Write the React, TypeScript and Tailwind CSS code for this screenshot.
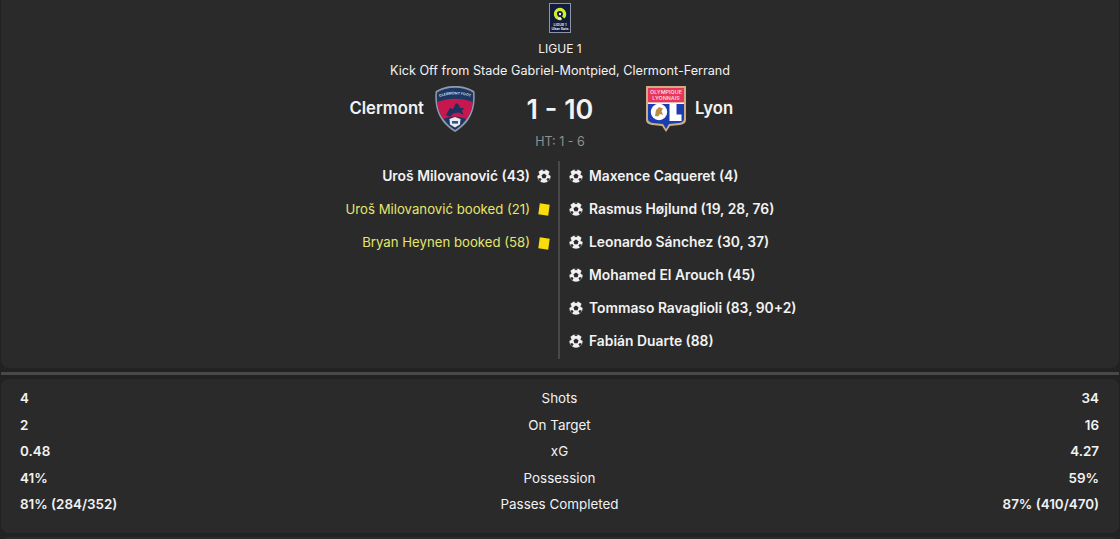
import React from 'react';

const HOME_EVENTS = [
  { label: 'Uroš Milovanović (43)', type: 'goal' },
  { label: 'Uroš Milovanović booked (21)', type: 'card' },
  { label: 'Bryan Heynen booked (58)', type: 'card' },
];

const AWAY_GOALS = [
  'Maxence Caqueret (4)',
  'Rasmus Højlund (19, 28, 76)',
  'Leonardo Sánchez (30, 37)',
  'Mohamed El Arouch (45)',
  'Tommaso Ravaglioli (83, 90+2)',
  'Fabián Duarte (88)',
];

const STATS = [
  ['4', 'Shots', '34'],
  ['2', 'On Target', '16'],
  ['0.48', 'xG', '4.27'],
  ['41%', 'Possession', '59%'],
  ['81% (284/352)', 'Passes Completed', '87% (410/470)'],
];

const Ball = () => (
  <svg width="14" height="14" viewBox="0 0 14 14" className="shrink-0">
    <circle cx="7" cy="7" r="6.7" fill="#f0f0f0" />
    <path d="M7 4.4 9.5 6.2 8.6 9.2H5.4L4.5 6.2Z" fill="#2a2a2a" />
    <path d="M4.6 .8 7 2.2 9.4 .8 7 0Z M12.4 3 11.4 5.6 13.8 7.2 13.8 5Z M1.6 3 2.6 5.6.2 7.2.2 5Z M3 12.6 4.6 10.6 3.2 9 1 9.8Z M11 12.6 9.4 10.6 10.8 9 13 9.8Z" fill="#2a2a2a" />
  </svg>
);

const YellowCard = () => (
  <span className="block w-[10px] h-[11px] mr-[2px] bg-[#f8dc0c] rotate-[8deg] shrink-0" />
);

const LigueLogo = () => (
  <svg width="22" height="30" viewBox="0 0 22 30">
    <rect x="0.5" y="0.5" width="21" height="29" fill="#101d3d" stroke="#8d96a6" />
    <circle cx="11" cy="11" r="4.6" fill="none" stroke="#d4ec2a" strokeWidth="3.2" strokeDasharray="26 3" transform="rotate(75 11 11)" />
    <path d="M9 15.6 12.5 15.8" stroke="#f3f6c0" strokeWidth="1.4" />
    <circle cx="11" cy="11" r="1.2" fill="#dfe6f0" />
    <text x="11" y="22.5" textAnchor="middle" fontSize="3.6" fill="#dfe2e8" fontFamily="Inter, sans-serif" fontWeight="700">LIGUE 1</text>
    <text x="11" y="27" textAnchor="middle" fontSize="3.6" fill="#dfe2e8" fontFamily="Inter, sans-serif" fontWeight="700">Uber Eats</text>
  </svg>
);

const ClermontBadge = () => (
  <svg width="40" height="46" viewBox="0 0 40 46">
    <path d="M20 0C28 0 35 2 39.5 5.5 40.5 20 38 35 20 46 2 35-.5 20 .5 5.5 5 2 12 0 20 0Z" fill="#8f99ab" />
    <path d="M20 1.8C27 1.8 33.5 3.5 38 6.5 38.8 20 36 33.5 20 44 4 33.5 1.2 20 2 6.5 6.5 3.5 13 1.8 20 1.8Z" fill="#1d3763" />
    <path d="M2.4 16C13 11.5 27 11.5 37.6 16 37.4 22 35.5 28 31.5 33 24 29.5 16 29.5 8.5 33 4.5 28 2.6 22 2.4 16Z" fill="#c8174f" />
    <path d="M11 29 15 22 18 23 21 17 24 19 25 22 29 22 27 25 28.5 29 24 26.5 18 27.5 15 31Z" fill="#1b3260" />
    <path d="M20 31 25.5 33 25 38.5 20 41.5 15 38.5 14.5 33Z" fill="#e8ebf0" />
    <rect x="17" y="35" width="6" height="2.6" fill="#37527f" />
    <path id="clermont-arc" d="M3 11.5C13 7.5 27 7.5 37 11.5" fill="none" />
    <text fontSize="3.6" fill="#d6dbe5" fontFamily="Inter, sans-serif" fontWeight="700">
      <textPath href="#clermont-arc" startOffset="50%" textAnchor="middle">CLERMONT FOOT</textPath>
    </text>
  </svg>
);

const LyonBadge = () => (
  <svg width="40" height="46" viewBox="0 0 40 46">
    <path d="M0 0H40V34Q40 38 34 39L24 40 20 46 16 40 6 39Q0 38 0 34Z" fill="#cdae84" />
    <rect x="2" y="2" width="36" height="14.5" fill="#e7355c" />
    <rect x="2" y="16.5" width="36" height="1.5" fill="#f6f6f6" />
    <path d="M2 18H38V33Q38 36 33 37L23 38 20 43 17 38 7 37Q2 36 2 33Z" fill="#1c3db0" />
    <text x="20" y="8.2" textAnchor="middle" fontSize="5.4" fill="#f8d6de" fontFamily="Inter, sans-serif" fontWeight="600">OLYMPIQUE</text>
    <text x="20" y="14.4" textAnchor="middle" fontSize="5.4" fill="#f8d6de" fontFamily="Inter, sans-serif" fontWeight="600">LYONNAIS</text>
    <circle cx="13" cy="26" r="8.2" fill="#fff" />
    <path d="M9 30 10 24 13 21 17 22.5 15.5 25 17 29 14 28 12 30.5Z" fill="#b98c48" />
    <path d="M23.5 18H30.5V28.5H35.5V35H23.5Z" fill="#fff" />
  </svg>
);

const App = () => {
  return (
    <div className="w-[1120px] h-[539px] overflow-hidden bg-[#222222] text-[#f2f2f2] font-['Inter','Liberation_Sans',sans-serif]">
      <div className="mx-px h-[368px] bg-[#2a2a2a] rounded-b-[8px] flex flex-col items-center pt-[3px]">
        <LigueLogo />
        <div className="mt-[8px] h-[16px] leading-[16px] text-[12px]">LIGUE 1</div>
        <div className="mt-[3px] h-[22px] leading-[22px] text-[12.65px]">Kick Off from Stade Gabriel-Montpied, Clermont-Ferrand</div>

        <div className="mt-[4px] w-full h-[46px] grid grid-cols-[1fr_130px_1fr] items-center">
          <div className="flex items-center justify-end gap-[11px] pr-[20px]">
            <span className="text-[16.7px] font-semibold">Clermont</span>
            <ClermontBadge />
          </div>
          <div className="text-center text-[27px] font-semibold leading-none">1 - 10</div>
          <div className="flex items-center gap-[9px] pl-[21px]">
            <LyonBadge />
            <span className="text-[16.7px] font-semibold">Lyon</span>
          </div>
        </div>

        <div className="h-[20px] leading-[20px] text-[12.5px] text-[#8f8f8f]">HT: 1 - 6</div>

        <div className="mt-[9px] w-full grid grid-cols-[1fr_1fr]">
          <div className="flex flex-col items-end pr-[8px] gap-[11.7px] pt-[4px] mr-[1px]">
            {HOME_EVENTS.map((event) =>
              event.type === 'goal' ? (
                <div key={event.label} className="flex items-center h-[22px] gap-[7px]">
                  <span className="text-[13.9px] font-semibold">{event.label}</span>
                  <Ball />
                </div>
              ) : (
                <div key={event.label} className="flex items-center h-[22px] gap-[9px]">
                  <span className="text-[13.2px] text-[#e4e66e]">{event.label}</span>
                  <YellowCard />
                </div>
              ),
            )}
          </div>
          <div className="h-[198px] border-l-2 border-[#484848] flex flex-col pl-[9px] pt-[4px] gap-[11px] -ml-[2px]">
            {AWAY_GOALS.map((goal) => (
              <div key={goal} className="flex items-center h-[22px] gap-[6px]">
                <Ball />
                <span className="text-[13.85px] font-semibold">{goal}</span>
              </div>
            ))}
          </div>
        </div>
      </div>

      <div className="mt-[4px] h-[3px] bg-[#484848] mx-px" />

      <div className="mt-[4px] mx-px h-[154px] bg-[#2a2a2a] rounded-[8px] pl-[19px] pr-[20px] pt-[6px] flex flex-col">
        {STATS.map(([home, label, away]) => (
          <div key={label} className="h-[26.5px] grid grid-cols-[1fr_auto_1fr] items-center text-[13.4px]">
            <span className="font-semibold">{home}</span>
            <span>{label}</span>
            <span className="font-semibold text-right">{away}</span>
          </div>
        ))}
      </div>

      <div className="mt-[4px] mx-px h-[8px] bg-[#2a2a2a] rounded-t-[8px]" />
    </div>
  );
};

export default App;
